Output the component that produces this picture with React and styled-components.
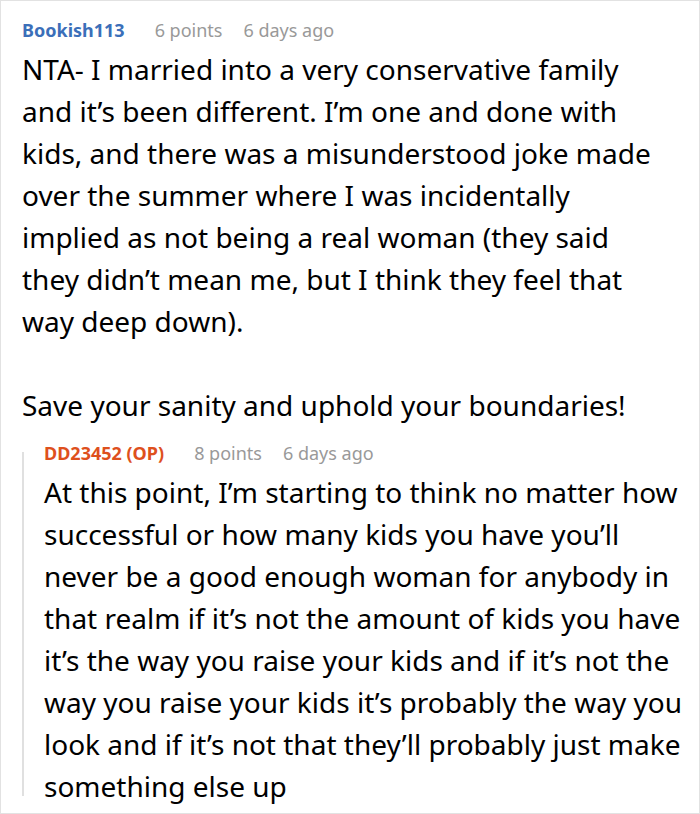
import React from 'react';
import styled, { createGlobalStyle } from 'styled-components';

const GlobalStyle = createGlobalStyle`
  html, body {
    margin: 0;
    padding: 0;
    background: #fff;
  }
  body {
    font-family: "Noto Sans", "Open Sans", sans-serif;
    -webkit-font-smoothing: antialiased;
  }
`;

const comment = {
  author: 'Bookish113',
  points: '6 points',
  age: '6 days ago',
  paragraphs: [
    'NTA- I married into a very conservative family and it’s been different. I’m one and done with kids, and there was a misunderstood joke made over the summer where I was incidentally implied as not being a real woman (they said they didn’t mean me, but I think they feel that way deep down).',
    'Save your sanity and uphold your boundaries!',
  ],
  reply: {
    author: 'DD23452 (OP)',
    op: true,
    points: '8 points',
    age: '6 days ago',
    paragraphs: [
      'At this point, I’m starting to think no matter how successful or how many kids you have you’ll never be a good enough woman for anybody in that realm if it’s not the amount of kids you have it’s the way you raise your kids and if it’s not the way you raise your kids it’s probably the way you look and if it’s not that they’ll probably just make something else up',
    ],
  },
};

const Comment = ({ data, nested }) =>
  <div>
    <Meta>
      <Author op={data.op}>{data.author}</Author>
      <Points>{data.points}</Points>
      <Age>{data.age}</Age>
    </Meta>
    <Body nested={nested}>
      {data.paragraphs.map((p, i) => <Paragraph key={i}>{p}</Paragraph>)}
    </Body>
  </div>;

const App = () =>
  <>
    <GlobalStyle />
    <Frame>
      <Comment data={comment} />
      <Reply>
        <ThreadLine />
        <ReplyContent>
          <Comment data={comment.reply} nested />
        </ReplyContent>
      </Reply>
    </Frame>
  </>;

const Frame = styled.div`
  box-sizing: border-box;
  width: 700px;
  height: 814px;
  overflow: hidden;
  border: 1px solid #e2e2e2;
  padding: 17px 0 0 21px;
`;

const Meta = styled.div`
  display: flex;
  align-items: baseline;
  height: 24px;
  font-size: 18px;
  line-height: 24px;
`;

const Author = styled.span`
  margin-right: 30px;
  font-weight: 700;
  color: ${p => (p.op ? '#de501d' : '#3b6fb9')};
`;

const Points = styled.span`
  margin-right: 21px;
  color: #999;
`;

const Age = styled.span`
  color: #999;
`;

const Body = styled.div`
  margin-top: 6px;
  padding-right: ${p => (p.nested ? 0 : 40)}px;
  font-size: 28px;
  line-height: 42px;
  color: #000;
`;

const Paragraph = styled.p`
  margin: 0 0 42px;
  &:last-child {
    margin-bottom: 0;
  }
`;

const Reply = styled.div`
  display: flex;
  margin-top: 15px;
`;

const ThreadLine = styled.div`
  flex: none;
  width: 2px;
  margin: 11px 0;
  background: #e0e0e0;
`;

const ReplyContent = styled.div`
  flex: 1;
  padding-left: 20px;
`;

export default App;
